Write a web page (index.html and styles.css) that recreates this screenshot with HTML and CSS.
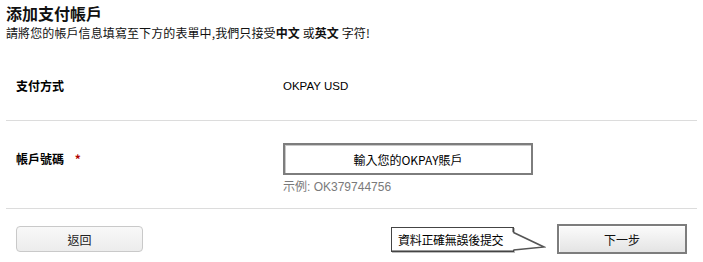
FILE: index.html
```html
<!DOCTYPE html>
<html lang="zh-Hant">
<head>
<meta charset="utf-8">
<title>添加支付帳戶</title>
<link rel="stylesheet" href="styles.css">
</head>
<body>
<div class="page">
  <header class="head">
    <h1 class="title">添加支付帳戶</h1>
    <p class="subtitle">請將您的帳戶信息填寫至下方的表單中,我們只接受<b>中文</b> 或<b>英文</b> 字符!</p>
  </header>

  <div class="row row-method">
    <div class="label">支付方式</div>
    <div class="value">OKPAY USD</div>
  </div>

  <div class="row row-account">
    <div class="label label-field">帳戶號碼 <span class="req">*</span></div>
    <div class="value">
      <input class="field" type="text" value="輸入您的OKPAY賬戶">
      <div class="hint">示例: OK379744756</div>
    </div>
  </div>

  <div class="footer">
    <button class="btn-back" type="button">返回</button>
    <div class="submit-group">
      <div class="callout">資料正確無誤後提交</div>
      <svg class="tail" width="34" height="25" viewBox="0 0 34 25">
        <polygon points="0,5 32,20 0,23" fill="#fff"/>
        <polyline points="1.5,5.5 32,20 1.5,23" fill="none" stroke="#555" stroke-width="1.6"/>
      </svg>
      <button class="btn-next" type="button">下一步</button>
    </div>
  </div>
</div>
</body>
</html>
```

FILE: styles.css
```css
html, body {
  margin: 0;
  padding: 0;
  background: #fff;
}

body {
  font-family: "Liberation Sans", "Noto Sans CJK TC", sans-serif;
  font-size: 12px;
  color: #000;
}

.page {
  width: 691px;
  padding: 0 6px;
}

.head {
  height: 39px;
}

.title {
  margin: 0;
  padding-top: 4px;
  font-family: "Noto Sans CJK TC", sans-serif;
  font-size: 16px;
  line-height: 19px;
  font-weight: bold;
  color: #111;
}

.subtitle {
  margin: 3px 0 0;
  font-family: "Noto Sans CJK TC", sans-serif;
  font-size: 12px;
  line-height: 13px;
  letter-spacing: 0.1px;
  color: #111;
}

.subtitle b {
  font-weight: bold;
}

.row {
  display: grid;
  grid-template-columns: 277px 1fr;
  align-items: start;
  border-bottom: 1px solid #dcdcdc;
}

.row-method {
  padding: 40px 0 27px;
}

.row-account {
  padding: 22px 0 14px;
}

.label {
  padding-left: 10px;
  font-family: "Noto Sans CJK TC", sans-serif;
  font-weight: bold;
  font-size: 12px;
  line-height: 14px;
}

.label-field {
  margin-top: 9px;
}

.req {
  color: #b00000;
  margin-left: 8px;
  font-weight: bold;
}

.value {
  font-size: 12px;
  line-height: 14px;
}

.row-method .value {
  font-size: 11.5px;
}

.field {
  display: block;
  box-sizing: border-box;
  width: 250px;
  height: 32px;
  margin: 0;
  padding: 0;
  border: 2px solid #7d7d7d;
  box-shadow: inset 1px 1px 0 #c8c8c8;
  background: #fff;
  text-align: center;
  font-family: "Noto Sans CJK TC", sans-serif;
  font-size: 12px;
  color: #000;
  outline: none;
}

.hint {
  margin-top: 5px;
  color: #7a7a7a;
  font-family: "Liberation Sans", "Noto Sans CJK TC", sans-serif;
  font-size: 12px;
  line-height: 14px;
}

.footer {
  display: flex;
  justify-content: space-between;
  align-items: center;
  padding-top: 15px;
  height: 30px;
}

.btn-back {
  margin-left: 10px;
  box-sizing: border-box;
  width: 127px;
  height: 26px;
  border: 1px solid #c9c9c9;
  border-radius: 4px;
  background: linear-gradient(#f8f8f8, #ececec);
  font-family: "Noto Sans CJK TC", sans-serif;
  font-size: 12px;
  color: #222;
  padding: 0;
}

.submit-group {
  display: flex;
  align-items: center;
  margin-right: 10px;
}

.callout {
  box-sizing: border-box;
  width: 123px;
  height: 25px;
  border: 1px solid #444;
  box-shadow: inset -1px -1px 0 #999, 1px 1px 0 #bbb;
  padding-left: 6px;
  font-family: "Noto Sans CJK TC", sans-serif;
  font-size: 12px;
  line-height: 23px;
  letter-spacing: -0.3px;
  background: #fff;
  white-space: nowrap;
}

.tail {
  display: block;
  margin-left: -2px;
  margin-right: 11px;
  margin-top: 1px;
}

.btn-next {
  box-sizing: border-box;
  width: 130px;
  height: 30px;
  border: 2px solid #7d7d7d;
  box-shadow: inset 1px 1px 0 #fff;
  border-radius: 0;
  background: linear-gradient(#fbfbfb, #e4e4e4);
  font-family: "Noto Sans CJK TC", sans-serif;
  font-size: 12px;
  color: #111;
  padding: 0;
}
```
